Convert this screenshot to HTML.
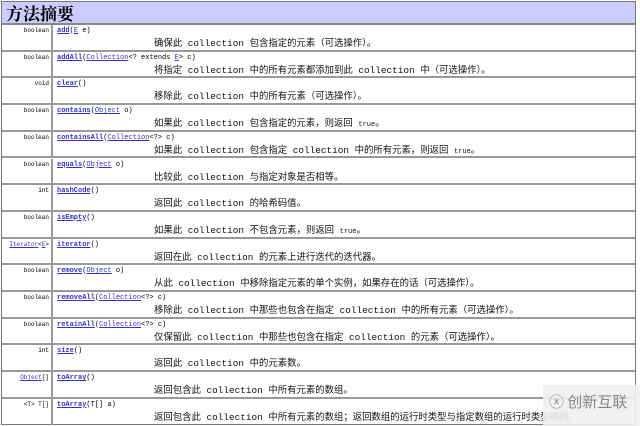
<!DOCTYPE html>
<html><head><meta charset="utf-8"><style>
body{margin:0;width:640px;height:426px;background:#fff;overflow:hidden;position:relative;font-family:"Liberation Mono","Noto Sans CJK SC",monospace;}
#t{position:absolute;left:1px;top:1px;width:635px;height:424px;border:1px solid #777;box-sizing:border-box;}
.h{position:absolute;left:0;top:0;width:633px;height:23px;background:#ccccff;border-bottom:2px solid #888;font:bold 17px "Noto Serif CJK SC","Liberation Serif",serif;line-height:21px;padding-left:4px;box-sizing:border-box;color:#000}
.r{position:absolute;left:0;width:633px;height:26.7px;border-bottom:2px solid #999;box-sizing:border-box;}
.ty{position:absolute;left:0;top:0;width:51px;height:100%;border-right:2px solid #999;text-align:right;font-size:6px;padding:2px 2px 0 0;box-sizing:border-box;}
.m{position:absolute;left:55px;top:2px;font-size:7px;color:#000}
.m b,.m a,.ty a{color:#33c;text-decoration:underline}
.d{position:absolute;left:152px;top:10px;font-size:9.4px;white-space:nowrap;color:#111}
.wm{position:absolute;left:543px;top:385px;width:97px;height:41px;background:rgba(240,240,240,.9);font:15px "Noto Sans CJK SC",sans-serif;color:#888;line-height:34px;padding-left:6px;box-sizing:border-box}
</style></head><body>
<div id="t">
<div class="h">方法摘要</div>
<div class="r" style="top:23px"><div class="ty">boolean</div><div class="m"><b>add</b>(<a>E</a> e)</div><div class="d">确保此 collection 包含指定的元素（可选操作）。</div></div>
<div class="r" style="top:49.7px"><div class="ty">boolean</div><div class="m"><b>addAll</b>(<a>Collection</a>&lt;? extends <a>E</a>&gt; c)</div><div class="d">将指定 collection 中的所有元素都添加到此 collection 中（可选操作）。</div></div>
<div class="r" style="top:76.4px"><div class="ty">void</div><div class="m"><b>clear</b>()</div><div class="d">移除此 collection 中的所有元素（可选操作）。</div></div>
<div class="r" style="top:103.1px"><div class="ty">boolean</div><div class="m"><b>contains</b>(<a>Object</a> o)</div><div class="d">如果此 collection 包含指定的元素，则返回 <span style="font-size:7px">true</span>。</div></div>
<div class="r" style="top:129.8px"><div class="ty">boolean</div><div class="m"><b>containsAll</b>(<a>Collection</a>&lt;?&gt; c)</div><div class="d">如果此 collection 包含指定 collection 中的所有元素，则返回 <span style="font-size:7px">true</span>。</div></div>
<div class="r" style="top:156.5px"><div class="ty">boolean</div><div class="m"><b>equals</b>(<a>Object</a> o)</div><div class="d">比较此 collection 与指定对象是否相等。</div></div>
<div class="r" style="top:183.2px"><div class="ty">int</div><div class="m"><b>hashCode</b>()</div><div class="d">返回此 collection 的哈希码值。</div></div>
<div class="r" style="top:209.9px"><div class="ty">boolean</div><div class="m"><b>isEmpty</b>()</div><div class="d">如果此 collection 不包含元素，则返回 <span style="font-size:7px">true</span>。</div></div>
<div class="r" style="top:236.6px"><div class="ty"><a>Iterator</a>&lt;<a>E</a>&gt;</div><div class="m"><b>iterator</b>()</div><div class="d">返回在此 collection 的元素上进行迭代的迭代器。</div></div>
<div class="r" style="top:263.3px"><div class="ty">boolean</div><div class="m"><b>remove</b>(<a>Object</a> o)</div><div class="d">从此 collection 中移除指定元素的单个实例，如果存在的话（可选操作）。</div></div>
<div class="r" style="top:290px"><div class="ty">boolean</div><div class="m"><b>removeAll</b>(<a>Collection</a>&lt;?&gt; c)</div><div class="d">移除此 collection 中那些也包含在指定 collection 中的所有元素（可选操作）。</div></div>
<div class="r" style="top:316.7px"><div class="ty">boolean</div><div class="m"><b>retainAll</b>(<a>Collection</a>&lt;?&gt; c)</div><div class="d">仅保留此 collection 中那些也包含在指定 collection 的元素（可选操作）。</div></div>
<div class="r" style="top:343.4px"><div class="ty">int</div><div class="m"><b>size</b>()</div><div class="d">返回此 collection 中的元素数。</div></div>
<div class="r" style="top:370.1px"><div class="ty"><a>Object</a>[]</div><div class="m"><b>toArray</b>()</div><div class="d">返回包含此 collection 中所有元素的数组。</div></div>
<div class="r" style="top:396.8px;border-bottom:none"><div class="ty">&lt;T&gt; T[]</div><div class="m"><b>toArray</b>(T[] a)</div><div class="d">返回包含此 collection 中所有元素的数组；返回数组的运行时类型与指定数组的运行时类型相同。</div></div>
</div>
<div class="wm">ⓧ 创新互联</div>
</body></html>
